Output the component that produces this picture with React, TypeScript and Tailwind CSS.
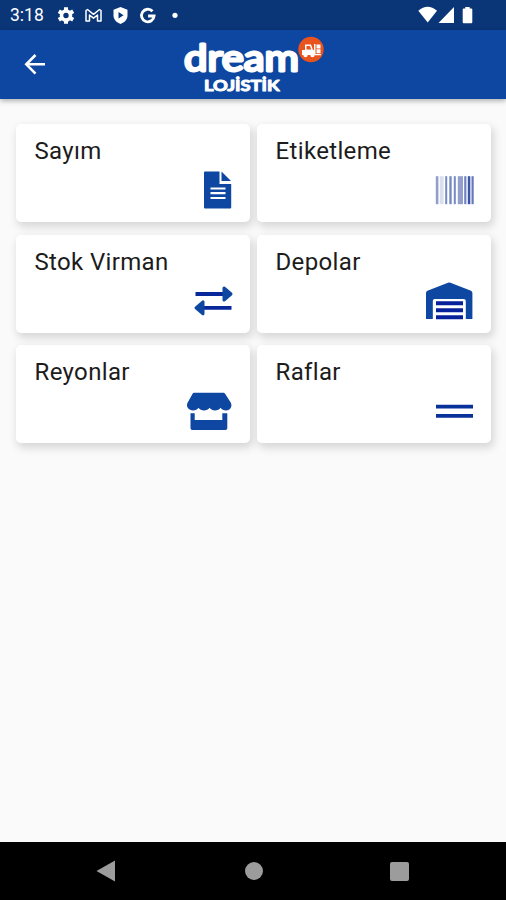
import React from 'react';

interface MenuItem {
  title: string;
  icon: React.ReactNode;
}

const DocumentIcon = () => (
  <>
    <path d="M20 4.500q0-1 1-1h14.500v12.500h11.700v23.500q0 1-1 1h-25.200q-1 0-1-1z" />
    <path d="M37.500 3.500l9.500 9.500h-9.500z" />
    <path d="M26.500 20.500h15M26.500 25.200h15M26.500 30h15" stroke="#fff" strokeWidth="2.200" />
  </>
);

const bars = [
  [10.8, 2.6, 0.5],
  [14.8, 3.8, 0.17],
  [20.2, 2, 0.62],
  [24.3, 2.4, 0.62],
  [28.8, 2, 0.62],
  [32.8, 5.2, 0.5],
  [39.2, 2.2, 0.65],
  [42.8, 2.5, 0.9],
  [46.5, 2.2, 0.7],
];

const BarcodeIcon = () => (
  <>
    {bars.map(([x, width, opacity]) => (
      <rect key={x} x={x} y="8.200" width={width} height="28" opacity={opacity} fill="#24409c" />
    ))}
  </>
);

const TransferIcon = () => (
  <>
    <path d="M11.500 15h30M17 28.800h30.500" stroke="#08279a" strokeWidth="3.800" />
    <path d="M40 9l7 6-7 6zM19 22.800l-7 6 7 6z" strokeLinejoin="round" stroke="#0d47a1" strokeWidth="3" />
  </>
);

const WarehouseIcon = () => (
  <>
    <path d="M1 14q0-1.500 1.400-2.200L23 3.800q1.200-.5 2.400 0L46 11.800q1.400.7 1.400 2.200v26h-6.600v-18q0-2-2-2h-29q-2 0-2 2v18h-6.800z" />
    <path d="M11 24.200h27M11 31.200h27M11 38.200h27" stroke="#08219a" strokeWidth="4" />
  </>
);

const StoreIcon = () => (
  <>
    <path d="M10.500 3.800h29q1 0 1.600.9l5.600 8.700c2 4-.4 8-4.700 8-2.300 0-4.200-1-5.400-2.700-1.300 1.700-3.300 2.700-5.500 2.700-2.300 0-4.200-1-5.500-2.700-1.300 1.700-3.300 2.700-5.600 2.700-2.300 0-4.200-1-5.500-2.700-1.200 1.700-3.100 2.700-5.400 2.700-4.300 0-7.700-4-5.400-8l4.900-8.700q.5-.9 1.400-.9z" />
    <path d="M6.500 24.300h4.200v6.700h27.600v-6.700h5v15q0 1.800-1.800 1.800h-33.200q-1.800 0-1.800-1.800z" />
  </>
);

const ShelfIcon = () => (
  <path d="M11 17.600h37M11 26.900h37" stroke="#08319a" strokeWidth="3.800" />
);

const items: MenuItem[] = [
  { title: 'Sayım', icon: <DocumentIcon /> },
  { title: 'Etiketleme', icon: <BarcodeIcon /> },
  { title: 'Stok Virman', icon: <TransferIcon /> },
  { title: 'Depolar', icon: <WarehouseIcon /> },
  { title: 'Reyonlar', icon: <StoreIcon /> },
  { title: 'Raflar', icon: <ShelfIcon /> },
];

const StatusBar = () => (
  <div className="flex h-[30px] items-center bg-[#0a3577] pl-2.5 text-white">
    <span className="w-[45px] pt-0.5 text-[17.5px] leading-none">3:18</span>
    <svg width="140" height="30" viewBox="55 0 140 30" fill="currentColor">
      {/* settings */}
      <circle cx="66" cy="15.500" r="4.500" fill="none" stroke="currentColor" strokeWidth="3.600" />
      <path d="M66 7.200v3M66 20.800v3M58.800 11.300l2.600 1.500M70.600 18.200l2.600 1.500M58.800 19.700l2.600-1.500M70.600 12.800l2.600-1.500" stroke="currentColor" strokeWidth="4" />
      {/* mail */}
      <path d="M86 21V10.500l1.500-1 6 4.800 6-4.800 1.500 1V21h-3.500v-6l-4 3.200-4-3.200v6z" fill="none" stroke="currentColor" strokeWidth="1.500" strokeLinejoin="round" />
      {/* shield */}
      <path d="M120.500 7l7 2.700v5.800c0 4-3 7-7 8.500-4-1.500-7-4.500-7-8.500V9.700z" />
      <path d="M118.500 12l5 3.300-5 3.300z" fill="#0a3577" />
      {/* google */}
      <path d="M152.500 11.300a6.300 6.300 0 1 0 1.600 4.700h-6" fill="none" stroke="currentColor" strokeWidth="2.800" />
      <circle cx="175" cy="15.300" r="2.600" />
    </svg>
    <svg className="mr-[30px] ml-auto" width="58" height="30" viewBox="418 0 58 30" fill="currentColor">
      <path d="M418.300 10.800q9.400-8 18.700 0L427.700 22.500z" />
      <path d="M454 7v16h-15.500z" />
      <path d="M462.700 9.500q0-1 1-1h1.600V7h4.400v1.500h1.600q1 0 1 1v12.700q0 1-1 1h-7.600q-1 0-1-1z" />
    </svg>
  </div>
);

const Logo = () => (
  <svg width="146" height="64" viewBox="180 34 146 64" fill="#fff" stroke="#fff" strokeLinejoin="round">
    <text x="184" y="71" fontSize="36" fontWeight="400" strokeWidth="2.800" textLength="115" lengthAdjust="spacingAndGlyphs" className="font-['Lato',sans-serif]">
      dream
    </text>
    <text x="204" y="91.300" fontSize="15" fontWeight="700" strokeWidth="1" textLength="75.500" lengthAdjust="spacingAndGlyphs" className="font-['Lato',sans-serif]">
      LOJİSTİK
    </text>
    <circle cx="311" cy="49.500" r="12.700" fill="#e9531d" stroke="none" />
    {/* forklift */}
    <g stroke="none">
      <path d="M302 50h3v-5.500h6l2 5.500h1V44h1.500v11h-13.500z" />
      <path d="M306.500 46h3.500l1.200 3.500h-4.700z" fill="#e9531d" />
      <circle cx="305.500" cy="55" r="2.200" />
      <circle cx="312.500" cy="55" r="2.200" />
      <path d="M316.500 44.500h4v4h-4zM316.500 49.300h4v4h-4zM315 54h6v1.200h-6z" />
    </g>
  </svg>
);

const AppBar = () => (
  <header className="relative flex h-[69px] items-start bg-[#0d47a1] shadow-[0_2px_5px_rgba(0,0,0,0.3)]">
    <button aria-label="Geri" className="mt-[23px] ml-[23px] w-[157px]">
      <svg width="24" height="24" viewBox="0 0 24 24" fill="none" stroke="#fff" strokeWidth="2.600">
        <path d="M22 11.300H4M12.500 2L3.300 11.300l9.200 9.300" />
      </svg>
    </button>
    <div className="mt-1">
      <Logo />
    </div>
  </header>
);

const MenuCard: React.FC<MenuItem> = ({ title, icon }) => (
  <button className="flex h-[98px] flex-col justify-between rounded-[5px] bg-white pt-[13px] pr-4 pb-[10px] pl-[18.5px] text-left shadow-[2px_4px_8px_1px_rgba(0,0,0,0.14)]">
    <span className="h-7 text-[24px] leading-7 tracking-[0.35px] text-[#1c1c1c]">{title}</span>
    <svg className="self-end" width="50" height="44" viewBox="0 0 50 44" fill="#0d47a1">
      {icon}
    </svg>
  </button>
);

const NavigationBar = () => (
  <nav className="flex h-[58px] items-center justify-between bg-black pr-[97px] pl-24">
    <svg width="20" height="22" viewBox="0 0 20 22" fill="#9c9c9c">
      <path d="M.5 11L19 .5v21z" />
    </svg>
    <span className="ml-[1px] size-[18px] rounded-full bg-[#9c9c9c]" />
    <span className="size-[19px] rounded-[2px] bg-[#9c9c9c]" />
  </nav>
);

const App: React.FC = () => {
  return (
    <div className="flex h-screen flex-col bg-[#fafafa] font-['Roboto',sans-serif]">
      <StatusBar />
      <AppBar />
      <main className="flex-1 pt-[25px] pr-[15px] pl-4">
        <div className="grid grid-cols-2 gap-x-[7px] gap-y-[12.5px]">
          {items.map(item => (
            <MenuCard key={item.title} {...item} />
          ))}
        </div>
      </main>
      <NavigationBar />
    </div>
  );
};

export default App;
